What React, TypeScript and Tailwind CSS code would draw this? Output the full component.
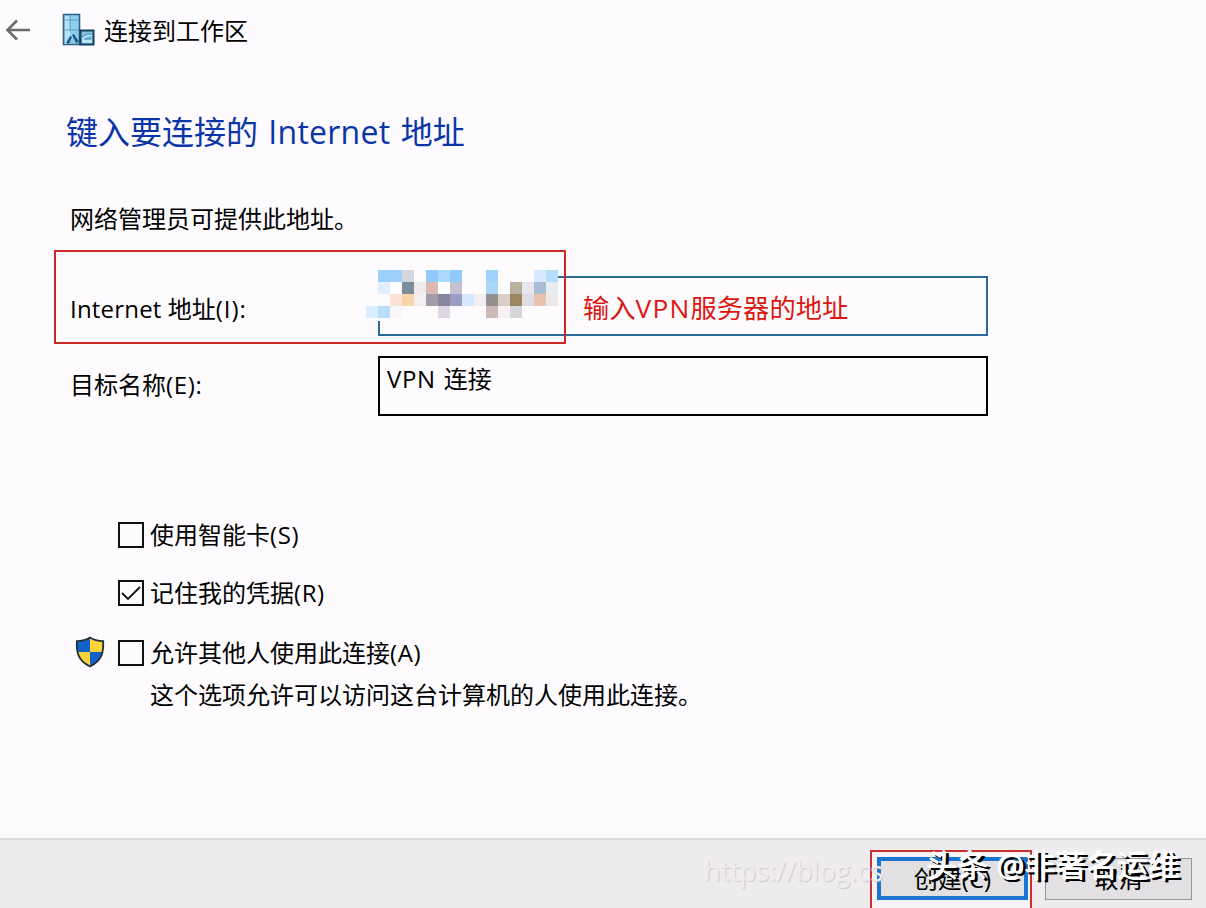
import React from 'react';

// 16 x 4 blocks that hide the server address
const MOSAIC: (string | null)[][] = [
  [null, '#9dd0fb', '#9dd0fb', '#d5d7dd', null, '#94c9fb', '#a9d8fb', '#94c9fb', null, null, '#9dd3fd', null, null, null, '#d3e9fd', '#b5dcfc'],
  [null, '#e0efff', '#ffffff', '#7b8c9c', '#efeaeb', '#dab9b0', '#ffffff', '#c3c0cf', null, null, '#a9d6f9', null, '#b8b09e', '#e7e6ec', '#a9bcd3', '#e9ecef'],
  [null, null, '#fae4d3', '#f9d5ab', '#f3eef0', '#a59ba5', '#86869c', '#9c9dc4', '#d3e8fd', '#f1edf0', '#96908f', '#d8d0c6', '#9b8662', '#dedbe2', '#e9c2ae', '#ece9ea'],
  ['#d9edfe', '#b9defd', '#f9f6f7', null, null, null, '#dcd7e3', null, null, null, '#ccbab3', '#f6f2f2', '#d4d6d8', null, null, null],
];

const BackIcon = () => (
  <svg width="26" height="24" viewBox="0 0 26 24" fill="none" stroke="#6b696c" strokeWidth="2.6">
    <path d="M25 12H2.5M12 2.5L2.5 12l9.5 9.5" />
  </svg>
);

const WorkplaceIcon = () => (
  <svg width="34" height="34" viewBox="0 0 34 34" fill="none">
    <path d="M1.5 1.5h16v30h-16z" fill="#8fcdec" stroke="#2d6285" strokeWidth="1.6" />
    <path d="M3 3h5v28H3z" fill="#b5e2f5" />
    <path d="M3 7h14M8 2v16M3 17h14" stroke="#5a9fc6" />
    <path d="M4 30l4-7 2 1-3 7zM10 22l2-1 5 8-3 1z" fill="#1d5b86" />
    <path d="M18.5 17.5h13v14h-13z" fill="#7fc4e8" stroke="#17405f" strokeWidth="2" />
    <path d="M20 24l5-4h5v3h-4l-4 3h8v4H20z" fill="#b9e4f6" />
    <path d="M20 24l5-3h5M22 26h7" stroke="#3278a3" />
  </svg>
);

const ShieldIcon = () => (
  <svg width="30" height="32" viewBox="0 0 30 32">
    <defs>
      <clipPath id="shield">
        <path d="M15 1.5C11 4 6 5 1.8 5.2C1.5 15 2 24 15 30.5C28 24 28.5 15 28.2 5.2C24 5 19 4 15 1.5z" />
      </clipPath>
    </defs>
    <g clipPath="url(#shield)">
      <path d="M0 0h15v16H0zM15 16h15v16H15z" fill="#1261c9" />
      <path d="M15 0h15v16H15zM0 16h15v16H0z" fill="#fbd43b" />
    </g>
    <path d="M15 1.5C11 4 6 5 1.8 5.2C1.5 15 2 24 15 30.5C28 24 28.5 15 28.2 5.2C24 5 19 4 15 1.5z" fill="none" stroke="#26303c" strokeWidth="1.8" />
  </svg>
);

interface CheckOptionProps {
  label: string;
  hotkey: string;
  checked?: boolean;
}

const CheckOption: React.FC<CheckOptionProps> = ({ label, hotkey, checked }) => (
  <label className="flex h-[26px] items-center gap-[6px]">
    <span className="flex size-[26px] shrink-0 items-center justify-center border-2 border-[#111]">
      {checked && (
        <svg width="22" height="22" viewBox="0 0 22 22" fill="none" stroke="#111" strokeWidth="1.8">
          <path d="M2 11l6 6L20 5" />
        </svg>
      )}
    </span>
    <span className="whitespace-nowrap">
      {label}
      <span className="tracking-[0.6px]">({hotkey})</span>
    </span>
  </label>
);

const App: React.FC = () => {
  return (
    <div className="flex h-[908px] w-[1206px] flex-col overflow-hidden bg-[#fdfbfe] font-['Open_Sans','Noto_Sans_CJK_SC',sans-serif] text-[24px] leading-[32px] text-black">
      <header className="flex h-[60px] shrink-0 items-center pl-[5px]">
        <BackIcon />
        <div className="ml-[31px]">
          <WorkplaceIcon />
        </div>
        <h1 className="mt-px ml-[8px]">连接到工作区</h1>
      </header>

      <main className="flex-1">
        <h2 className="mt-[52px] pl-[66px] text-[32px] leading-[40px] text-[#0a35a8] [word-spacing:2px]">
          键入要连接的 <span className="tracking-[0.25px]">Internet</span> 地址
        </h2>
        <p className="mt-[51px] pl-[70px]">网络管理员可提供此地址。</p>

        <div className="relative mt-[15px] ml-[54px] flex h-[94px] w-[934px]">
          <span className="mt-[43px] ml-[16px] w-[308px]">
            <span className="tracking-[0.2px]">Internet</span> 地址<span className="tracking-[0.9px]">(I):</span>
          </span>
          <div className="mt-[26px] flex h-[60px] w-[610px] items-center border-2 border-[#2c6a99] pt-[4px] pl-[203px] text-[26.3px] text-[#dc1712]">
            输入<span className="tracking-[1.2px]">VPN</span>服务器的地址
          </div>
          <div className="absolute top-[20px] left-[312px] h-[51px] w-[192px] bg-[#fdfbfe]">
            <div className="grid grid-cols-16">
              {MOSAIC.flat().map((color, i) => (
                <span key={i} className="h-[12px]" style={{ backgroundColor: color ?? 'transparent' }} />
              ))}
            </div>
          </div>
          <div className="absolute top-0 left-0 h-[94px] w-[512px] border-2 border-[#cb2a26]" />
        </div>

        <div className="mt-[12px] ml-[70px] flex">
          <span className="mt-[13px] w-[308px]">
            目标名称<span className="tracking-[0.7px]">(E):</span>
          </span>
          <div className="h-[60px] w-[610px] border-2 border-black pt-[5px] pl-[7px] [word-spacing:2px]">
            <span className="tracking-[0.6px]">VPN</span> 连接
          </div>
        </div>

        <div className="mt-[106px] ml-[118px]">
          <CheckOption label="使用智能卡" hotkey="S" />
          <div className="mt-[32px]">
            <CheckOption label="记住我的凭据" hotkey="R" checked />
          </div>
          <div className="mt-[31px] -ml-[43px] flex h-[32px] gap-[13px]">
            <div className="-mt-px">
              <ShieldIcon />
            </div>
            <div className="mt-[3px]">
              <CheckOption label="允许其他人使用此连接" hotkey="A" />
            </div>
          </div>
          <p className="mt-[10px] ml-[32px]">这个选项允许可以访问这台计算机的人使用此连接。</p>
        </div>
      </main>

      <footer className="relative flex h-[70px] shrink-0 justify-end border-t-2 border-[#dcdadd] bg-[#eeecef] pr-[14px]">
        <div className="mt-[10px] mr-[13px] h-[64px] w-[162px] border-2 border-[#c8322c] bg-[#f5f3f6] pt-[5px] pr-[2px] pl-[5px]">
          <button className="h-[43px] w-full border-4 border-[#1b74d0] bg-[#e2e0e3] leading-[32px]">创建(C)</button>
        </div>
        <button className="mt-[18px] h-[42px] w-[147px] border border-[#989699] bg-[#e2e0e3]">取消</button>
        <span className="absolute top-[11px] left-[704px] text-[27px] leading-[40px] text-[#eeecef] [text-shadow:1px_1px_1px_#cbc9cc]">
          https://blog.cs
        </span>
        <span className="absolute top-[5px] left-[927px] text-[31px] leading-[40px] whitespace-nowrap text-white [text-shadow:-1px_-1px_0_#fff,2px_2px_0_#000,3px_2px_0_#000]">
          头条 @非著名运维
        </span>
      </footer>
    </div>
  );
};

export default App;
